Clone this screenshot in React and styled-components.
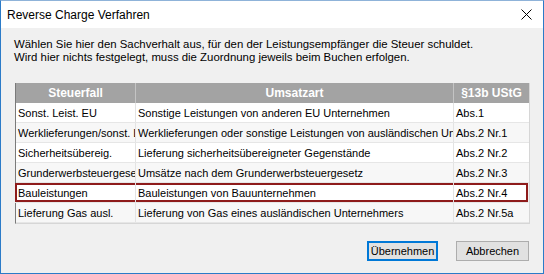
import React from "react";
import styled, { createGlobalStyle } from "styled-components";

const Global = createGlobalStyle`
  html, body {
    margin: 0;
    padding: 0;
    background: #ffffff;
  }
  * {
    box-sizing: border-box;
  }
`;

const Fenster = styled.div`
  width: 544px;
  height: 274px;
  display: flex;
  flex-direction: column;
  border: 1px solid #2b7bc8;
  border-top-color: #8fb3d9;
  background: #f0f0f0;
  font-family: "Liberation Sans", Arial, sans-serif;
  color: #000000;
  overflow: hidden;
`;

const TitelLeiste = styled.div`
  height: 27px;
  flex-shrink: 0;
  display: flex;
  align-items: center;
  justify-content: space-between;
  padding: 0 11px 0 6px;
  background: #ffffff;
  font-size: 12px;
`;

const Inhalt = styled.div`
  flex: 1;
  display: flex;
  flex-direction: column;
  padding: 10px 13px 0 13px;
  font-size: 11.4px;
`;

const Hinweis = styled.p`
  margin: 0 0 19px 0;
  line-height: 13px;
  height: 26px;
`;

const Tabelle = styled.div`
  width: 515px;
  display: flex;
  flex-direction: column;
  border-left: 1px solid #7a7a7a;
  border-bottom: 1px solid #d6d6d6;
  border-right: 1px solid #d6d6d6;
  margin-left: 1px;
`;

const Zeile = styled.div`
  display: grid;
  grid-template-columns: 120px 318px 1fr;
  height: 20px;
  background: ${({ $kopf, $grau }) =>
    $kopf ? "#a3a3a3" : $grau ? "#f7f7f7" : "#ffffff"};
  border-bottom: ${({ $kopf }) => ($kopf ? "none" : "1px solid #e6e6e6")};
  box-shadow: ${({ $aktiv }) => ($aktiv ? "inset 0 0 0 2px #8e1b1b" : "none")};
  margin-left: ${({ $aktiv }) => ($aktiv ? "-1px" : "0")};
  margin-right: ${({ $aktiv }) => ($aktiv ? "1px" : "0")};
  padding-left: ${({ $aktiv }) => ($aktiv ? "1px" : "0")};
`;

const Zelle = styled.div`
  display: flex;
  align-items: center;
  padding: 0 2px;
  white-space: nowrap;
  overflow: hidden;
  border-right: 1px solid ${({ $kopf }) => ($kopf ? "#c4c4c4" : "#e3e3e3")};
  justify-content: ${({ $kopf }) => ($kopf ? "center" : "flex-start")};
  color: ${({ $kopf }) => ($kopf ? "#ffffff" : "#000000")};
  font-weight: ${({ $kopf }) => ($kopf ? "bold" : "normal")};
  font-size: ${({ $kopf }) => ($kopf ? "12px" : "11px")};

  &:last-child {
    border-right: none;
  }
`;

const KnopfLeiste = styled.div`
  display: flex;
  justify-content: flex-end;
  gap: 18px;
  margin-top: 17px;
  padding-right: 1px;
`;

const Knopf = styled.button`
  height: 20px;
  width: ${({ $breite }) => $breite}px;
  padding: 0;
  font-family: "Liberation Sans", Arial, sans-serif;
  font-size: 11px;
  color: #000000;
  background: #e1e1e1;
  border: ${({ $standard }) =>
    $standard ? "2px solid #0078d7" : "1px solid #adadad"};
`;

const zeilen = [
  ["Sonst. Leist. EU", "Sonstige Leistungen von anderen EU Unternehmen", "Abs.1"],
  ["Werklieferungen/sonst. Leistungen", "Werklieferungen oder sonstige Leistungen von ausländischen Unternehmen", "Abs.2 Nr.1"],
  ["Sicherheitsübereig.", "Lieferung sicherheitsübereigneter Gegenstände", "Abs.2 Nr.2"],
  ["Grunderwerbsteuergesetz", "Umsätze nach dem Grunderwerbsteuergesetz", "Abs.2 Nr.3"],
  ["Bauleistungen", "Bauleistungen von Bauunternehmen", "Abs.2 Nr.4"],
  ["Lieferung Gas ausl.", "Lieferung von Gas eines ausländischen Unternehmers", "Abs.2 Nr.5a"],
];

export default function App() {
  return (
    <>
      <Global />
      <Fenster>
        <TitelLeiste>
          <span>Reverse Charge Verfahren</span>
          <svg width="11" height="11" viewBox="0 0 11 11">
            <path d="M0.5 0.5 L10.5 10.5 M10.5 0.5 L0.5 10.5" stroke="#000" strokeWidth="1" />
          </svg>
        </TitelLeiste>
        <Inhalt>
          <Hinweis>
            Wählen Sie hier den Sachverhalt aus, für den der Leistungsempfänger die Steuer schuldet.
            <br />
            Wird hier nichts festgelegt, muss die Zuordnung jeweils beim Buchen erfolgen.
          </Hinweis>
          <Tabelle>
            <Zeile $kopf>
              <Zelle $kopf>Steuerfall</Zelle>
              <Zelle $kopf>Umsatzart</Zelle>
              <Zelle $kopf>§13b UStG</Zelle>
            </Zeile>
            {zeilen.map((z, i) => (
              <Zeile key={i} $grau={i % 2 === 1} $aktiv={i === 4}>
                <Zelle>{z[0]}</Zelle>
                <Zelle>{z[1]}</Zelle>
                <Zelle>{z[2]}</Zelle>
              </Zeile>
            ))}
          </Tabelle>
          <KnopfLeiste>
            <Knopf $standard $breite={71}>Übernehmen</Knopf>
            <Knopf $breite={73}>Abbrechen</Knopf>
          </KnopfLeiste>
        </Inhalt>
      </Fenster>
    </>
  );
}
